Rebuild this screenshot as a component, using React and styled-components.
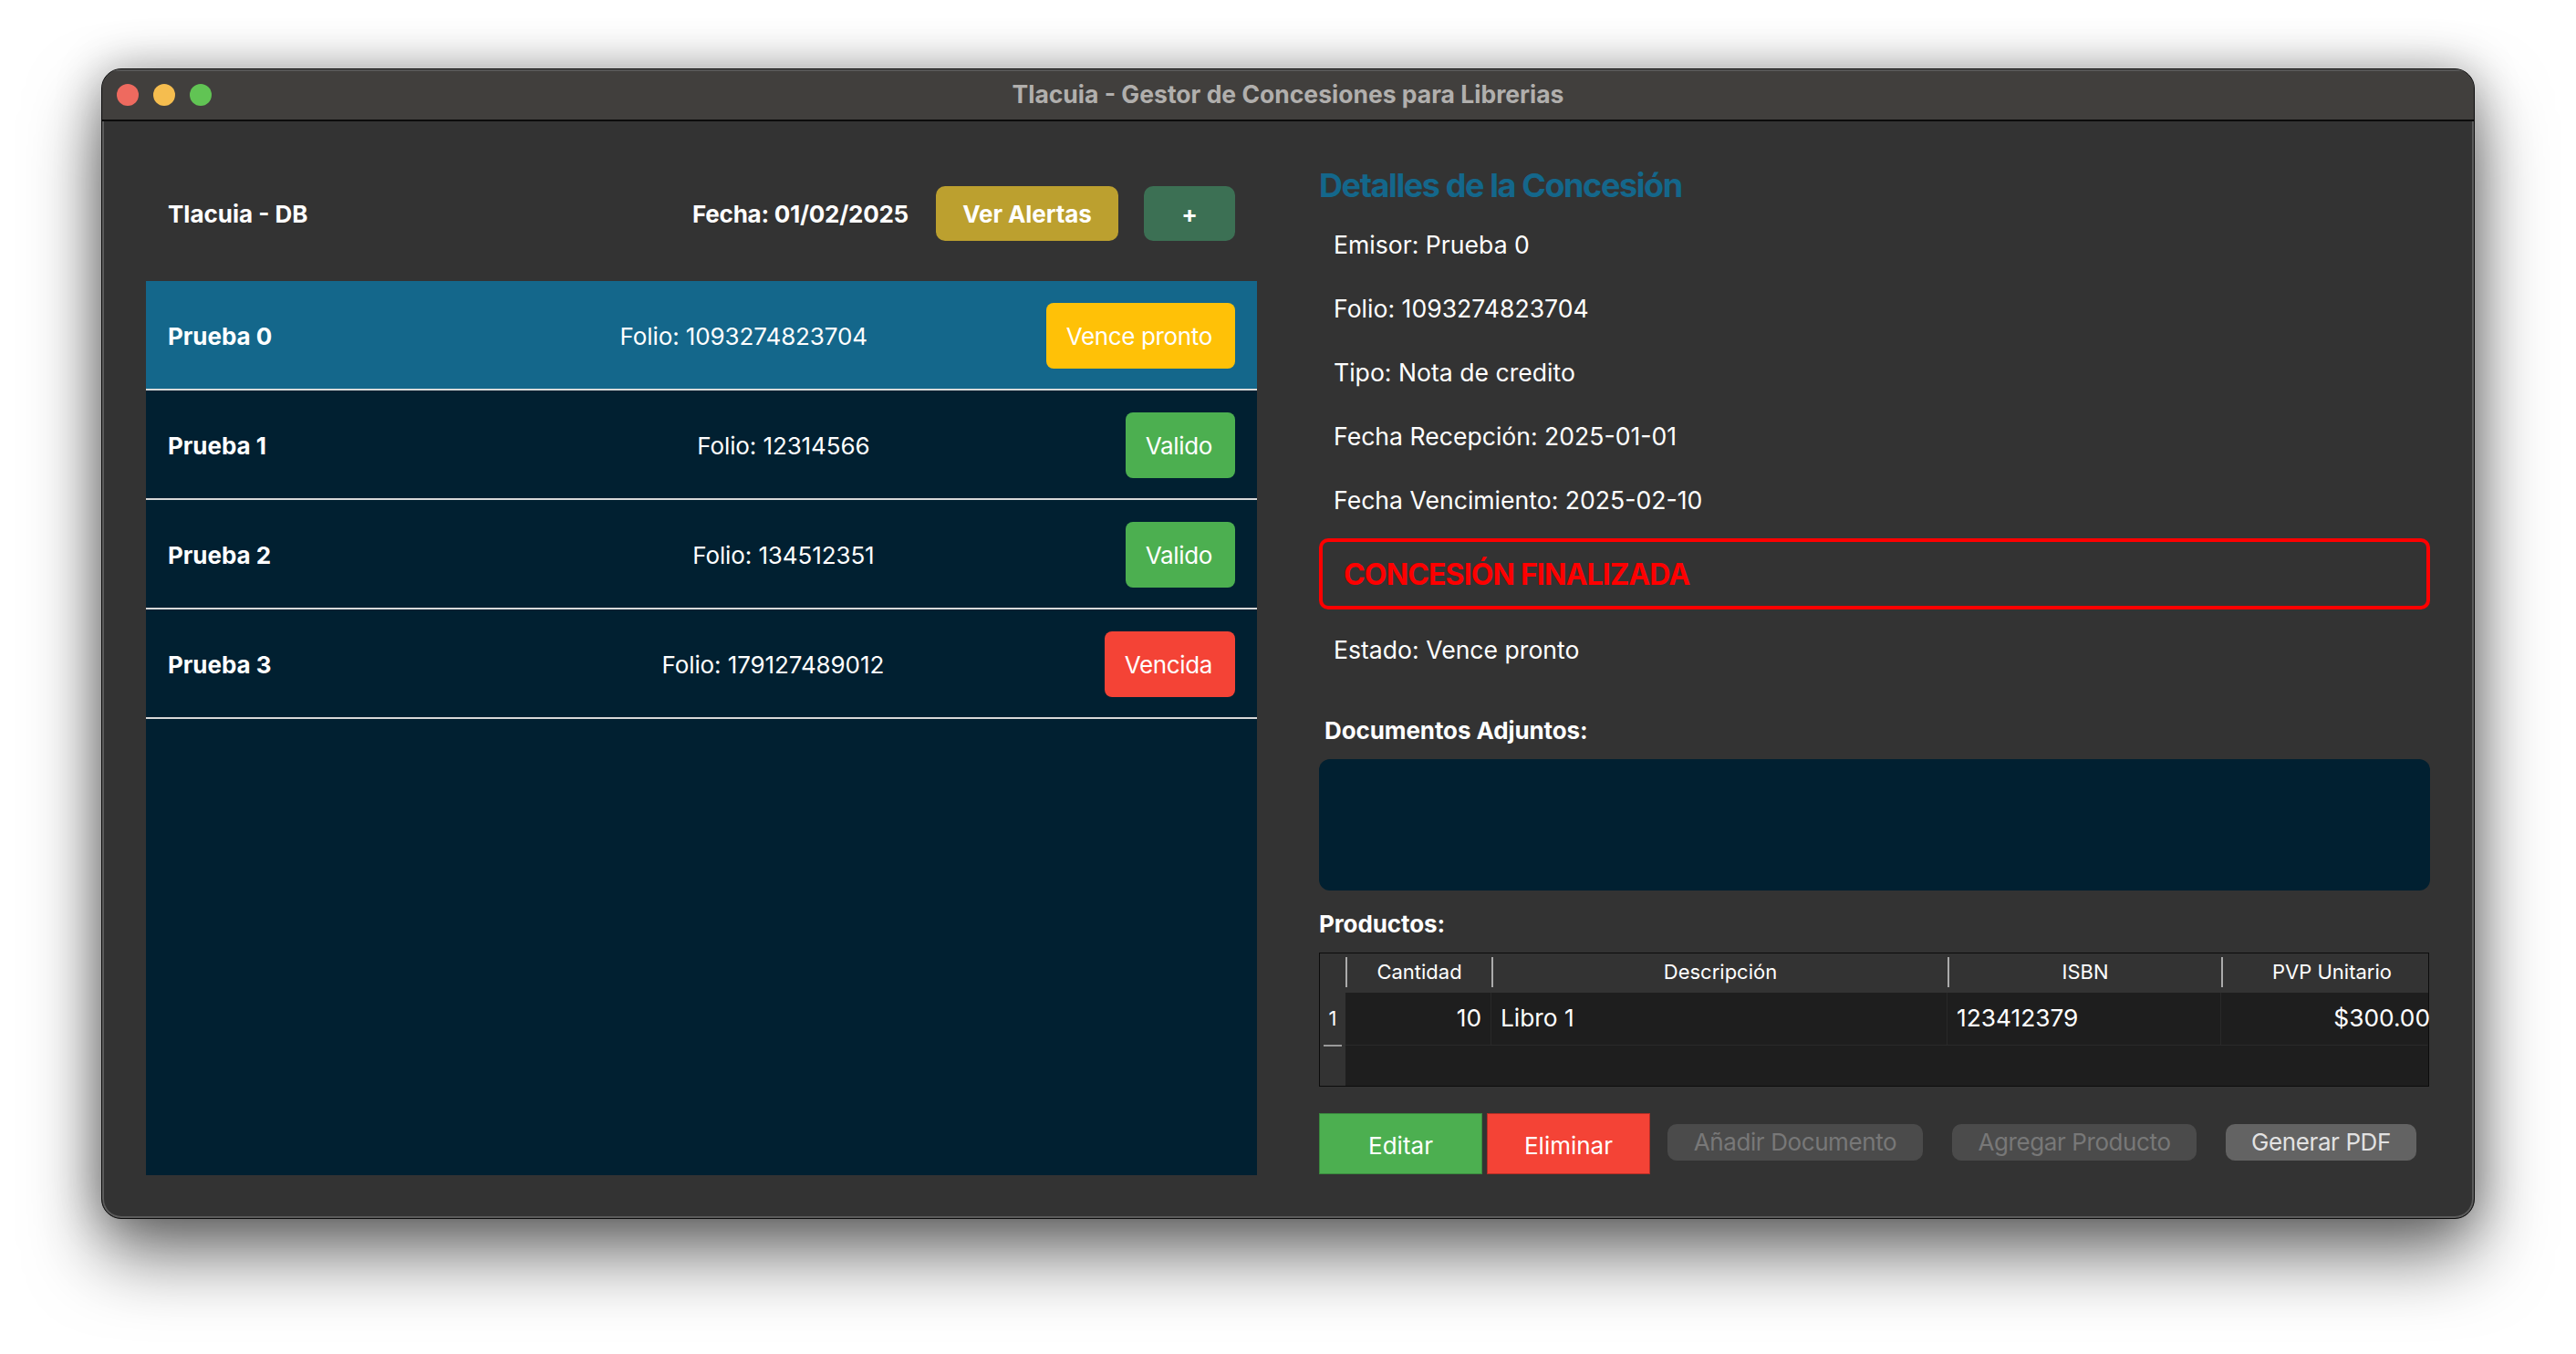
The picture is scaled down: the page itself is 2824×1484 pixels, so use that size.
import React from 'react'
import styled, { createGlobalStyle } from 'styled-components'

const GlobalStyle = createGlobalStyle`
  html, body {
    margin: 0;
    background: #ffffff;
  }
  * {
    box-sizing: border-box;
  }
`

const Page = styled.div`
  width: 2824px;
  height: 1484px;
  padding: 75px 111px 148px;
  overflow: hidden;
  font-family: Inter, "Liberation Sans", sans-serif;
  color: #ffffff;
`

const Window = styled.div`
  height: 1261px;
  display: flex;
  flex-direction: column;
  overflow: hidden;
  background: #333333;
  border: 1px solid #0c0c0c;
  border-radius: 22px;
  box-shadow: inset 0 0 0 2px #5c5c5c, 0 40px 80px rgba(0, 0, 0, 0.55), 0 0 50px rgba(0, 0, 0, 0.3);
`

const TitleBar = styled.div`
  height: 57px;
  flex: none;
  display: grid;
  grid-template-columns: 1fr auto 1fr;
  align-items: center;
  padding: 0 16px 2px;
  background: #413f3d;
  border-top: 2px solid #565656;
  border-bottom: 2px solid #0c0c0c;
`

const Lights = styled.div`
  display: flex;
  gap: 16px;
`

const Light = styled.span`
  width: 24px;
  height: 24px;
  border-radius: 50%;
  background: ${p => p.$color};
`

const WindowTitle = styled.div`
  margin-bottom: 2px;
  font-size: 26.5px;
  font-weight: 700;
  color: #b1afad;
`

const Content = styled.div`
  flex: 1;
  display: grid;
  grid-template-columns: 1218px 1218px;
  column-gap: 68px;
  padding: 0 0 47px 48px;
  min-height: 0;
`

const LeftPane = styled.div`
  display: flex;
  flex-direction: column;
  padding-top: 71px;
  min-height: 0;
`

const TopBar = styled.div`
  height: 60px;
  flex: none;
  display: flex;
  align-items: center;
  margin-bottom: 44px;
  padding: 0 24px;
`

const AppName = styled.div`
  flex: 1;
  font-size: 26px;
  font-weight: 700;
`

const DateLabel = styled.div`
  font-size: 26px;
  font-weight: 700;
  letter-spacing: -0.25px;
  margin-right: 30px;
`

const TopButton = styled.div`
  height: 60px;
  width: ${p => p.$width}px;
  margin-left: ${p => p.$gap || 0}px;
  display: flex;
  align-items: center;
  justify-content: center;
  border-radius: 10px;
  background: ${p => p.$color};
  font-size: 26px;
  font-weight: 700;
  letter-spacing: -0.1px;
`

const List = styled.div`
  flex: 1;
  background: #012031;
`

const Row = styled.div`
  height: 120px;
  display: flex;
  align-items: center;
  padding: 2px 24px 0;
  background: ${p => (p.$selected ? '#14678b' : 'transparent')};
  border-bottom: 2px solid #d8d8d8;
`

const RowName = styled.div`
  width: 300px;
  flex: none;
  font-size: 26px;
  font-weight: 700;
  letter-spacing: -0.05px;
`

const RowFolio = styled.div`
  flex: 1;
  margin: 0 16px;
  text-align: center;
  font-size: 26px;
  letter-spacing: -0.1px;
`

const Badge = styled.div`
  height: 72px;
  padding: 0 25px 0 22px;
  display: flex;
  align-items: center;
  border-radius: 8px;
  background: ${p => p.$color};
  font-size: 26px;
  letter-spacing: -0.35px;
`

const RightPane = styled.div`
  display: flex;
  flex-direction: column;
  padding-top: 47px;
  min-height: 0;
`

const Heading = styled.h2`
  height: 46px;
  margin: 0 0 7px;
  font-size: 36px;
  line-height: 46px;
  font-weight: 700;
  letter-spacing: -1.4px;
  color: #14678b;
`

const Info = styled.div`
  height: 70px;
  flex: none;
  display: flex;
  align-items: center;
  padding-left: 16px;
  font-size: 26.6px;
`

const Alert = styled.div`
  height: 78px;
  flex: none;
  display: flex;
  align-items: center;
  margin: 7px 0 9px;
  padding-left: 23px;
  border: 4px solid #ff0000;
  border-radius: 10px;
  font-size: 32px;
  font-weight: 700;
  letter-spacing: -0.85px;
  color: #ff0000;
`

const SectionLabel = styled.div`
  height: 30px;
  flex: none;
  display: flex;
  align-items: center;
  margin: ${p => p.$top}px 0 ${p => p.$bottom}px;
  padding-left: ${p => p.$indent || 0}px;
  font-size: 26px;
  font-weight: 700;
  letter-spacing: -0.1px;
`

const Documents = styled.div`
  height: 144px;
  flex: none;
  border-radius: 12px;
  background: #012031;
`

const Table = styled.div`
  height: 147px;
  width: 1217px;
  flex: none;
  display: grid;
  grid-template-columns: 28px 160px 500px 300px 1fr;
  grid-template-rows: 43px 58px 1fr;
  border: 1px solid #0c0c0c;
  background: #333333;
`

const HeadCell = styled.div`
  margin: 4px 0 6px;
  padding: 0 0 2px ${p => p.$indent || 0}px;
  display: flex;
  align-items: center;
  justify-content: center;
  border-left: 2px solid #ababab;
  font-size: 22px;
`

const Corner = styled.div``

const RowHead = styled.div`
  display: flex;
  align-items: center;
  justify-content: center;
  padding-bottom: 2px;
  font-size: 22px;
  position: relative;
  &::after {
    content: '';
    position: absolute;
    left: 4px;
    right: 4px;
    bottom: -1px;
    height: 2px;
    background: #9a9a9a;
  }
`

const Cell = styled.div`
  display: flex;
  align-items: center;
  justify-content: ${p => (p.$right ? 'flex-end' : 'flex-start')};
  padding: 0 ${p => p.$padRight || 0}px 2px ${p => (p.$right ? 0 : 10)}px;
  background: #1e1e1e;
  border-right: 1px solid ${p => (p.$last ? '#1e1e1e' : '#292929')};
  border-bottom: 1px solid #292929;
  font-size: 26.3px;
`

const Amount = styled.span`
  margin-right: -3px;
`

const Filler = styled.div`
  grid-column: 2 / -1;
  background: #1e1e1e;
`

const Actions = styled.div`
  margin-top: 29px;
  display: flex;
  align-items: flex-start;
`

const SolidButton = styled.div`
  width: 179px;
  height: 67px;
  margin-right: ${p => p.$gap}px;
  display: flex;
  align-items: center;
  justify-content: center;
  padding-top: 3px;
  background: ${p => p.$color};
  border: 1px solid ${p => p.$edge};
  font-size: 26px;
`

const SoftButton = styled.div`
  width: ${p => p.$width}px;
  height: 40px;
  margin: 12px ${p => p.$gap || 0}px 0 0;
  padding-bottom: 2px;
  display: flex;
  align-items: center;
  justify-content: center;
  border-radius: 10px;
  background: ${p => (p.$disabled ? '#4b4b4b' : '#636363')};
  color: ${p => (p.$disabled ? '#787878' : '#e2e2e2')};
  font-size: 26px;
  letter-spacing: -0.4px;
`

const rows = [
  { name: 'Prueba 0', folio: '1093274823704', status: 'Vence pronto', color: '#ffc107', selected: true },
  { name: 'Prueba 1', folio: '12314566', status: 'Valido', color: '#4caf50' },
  { name: 'Prueba 2', folio: '134512351', status: 'Valido', color: '#4caf50' },
  { name: 'Prueba 3', folio: '179127489012', status: 'Vencida', color: '#f44336' },
]

const App = () => {
  return (
    <Page>
      <GlobalStyle />
      <Window>
        <TitleBar>
          <Lights>
            <Light $color="#ee6a5f" />
            <Light $color="#f5bd4f" />
            <Light $color="#61c454" />
          </Lights>
          <WindowTitle>Tlacuia - Gestor de Concesiones para Librerias</WindowTitle>
        </TitleBar>
        <Content>
          <LeftPane>
            <TopBar>
              <AppName>Tlacuia - DB</AppName>
              <DateLabel>Fecha: 01/02/2025</DateLabel>
              <TopButton $width={200} $color="#bca02f">Ver Alertas</TopButton>
              <TopButton $width={100} $gap={28} $color="#3c7054">+</TopButton>
            </TopBar>
            <List>
              {rows.map(row => (
                <Row key={row.name} $selected={row.selected}>
                  <RowName>{row.name}</RowName>
                  <RowFolio>Folio: {row.folio}</RowFolio>
                  <Badge $color={row.color}>{row.status}</Badge>
                </Row>
              ))}
            </List>
          </LeftPane>
          <RightPane>
            <Heading>Detalles de la Concesión</Heading>
            <Info>Emisor: Prueba 0</Info>
            <Info>Folio: 1093274823704</Info>
            <Info>Tipo: Nota de credito</Info>
            <Info>Fecha Recepción: 2025-01-01</Info>
            <Info>Fecha Vencimiento: 2025-02-10</Info>
            <Alert>CONCESIÓN FINALIZADA</Alert>
            <Info>Estado: Vence pronto</Info>
            <SectionLabel $top={38} $bottom={17} $indent={6}>Documentos Adjuntos:</SectionLabel>
            <Documents />
            <SectionLabel $top={21} $bottom={17}>Productos:</SectionLabel>
            <Table>
              <Corner />
              <HeadCell>Cantidad</HeadCell>
              <HeadCell>Descripción</HeadCell>
              <HeadCell>ISBN</HeadCell>
              <HeadCell $indent={14}>PVP Unitario</HeadCell>
              <RowHead>1</RowHead>
              <Cell $right $padRight={10}>10</Cell>
              <Cell>Libro 1</Cell>
              <Cell>123412379</Cell>
              <Cell $right $last><Amount>$300.00</Amount></Cell>
              <Corner />
              <Filler />
            </Table>
            <Actions>
              <SolidButton $gap={5} $color="#4caf50" $edge="#3a8a3e">Editar</SolidButton>
              <SolidButton $gap={19} $color="#f44336" $edge="#b52d25">Eliminar</SolidButton>
              <SoftButton $width={280} $gap={32} $disabled>Añadir Documento</SoftButton>
              <SoftButton $width={268} $gap={32} $disabled>Agregar Producto</SoftButton>
              <SoftButton $width={209}>Generar PDF</SoftButton>
            </Actions>
          </RightPane>
        </Content>
      </Window>
    </Page>
  )
}

export default App
